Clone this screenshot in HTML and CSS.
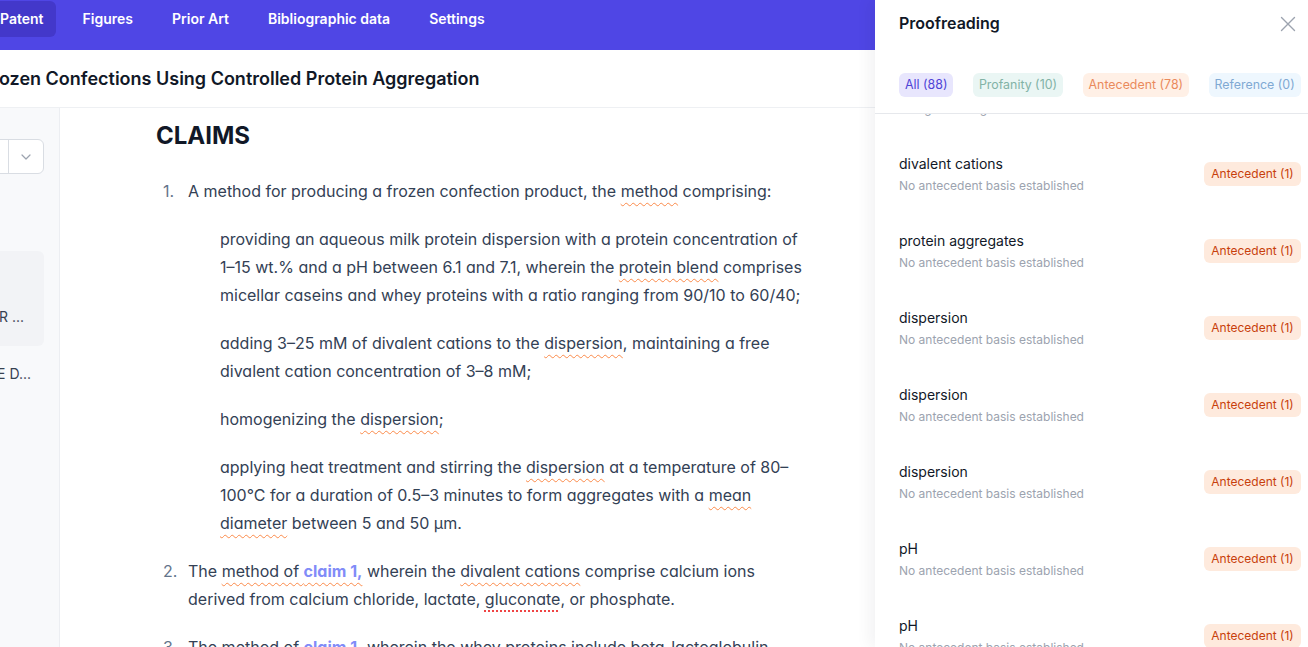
FILE: index.html
```html
<!DOCTYPE html>
<html lang="en">
<head>
<meta charset="utf-8">
<title>Claims – Proofreading</title>
<link rel="stylesheet" href="styles.css">
</head>
<body>
<div class="app">
  <div class="workspace">
    <nav class="topnav">
      <a class="tab active">Patent</a>
      <a class="tab">Figures</a>
      <a class="tab">Prior Art</a>
      <a class="tab">Bibliographic data</a>
      <a class="tab">Settings</a>
    </nav>
    <header class="titlebar">
      <h1>Frozen Confections Using Controlled Protein Aggregation</h1>
    </header>
    <div class="work-body">
      <aside class="sidebar">
        <div class="select">
          <div class="select-value"></div>
          <div class="select-toggle">
            <svg width="10" height="6" viewBox="0 0 10 6" fill="none"><path d="M1 1l4 4 4-4" stroke="#9ca3af" stroke-width="1.2" stroke-linecap="round" stroke-linejoin="round"/></svg>
          </div>
        </div>
        <div class="side-item selected"><span class="side-text">R ...</span></div>
        <div class="side-item"><span class="side-text">E D...</span></div>
      </aside>
      <main class="doc">
        <h2 class="doc-heading">CLAIMS</h2>
        <ol class="claims">
          <li class="claim">
            <span class="claim-num">1.</span>
            <div class="claim-body">
              <p>A method for producing a frozen confection product, the <span class="flag">method</span> comprising:</p>
              <p class="sub">providing an aqueous milk protein dispersion with a protein concentration of 1–15 wt.% and a pH between 6.1 and 7.1, wherein the <span class="flag">protein blend</span> comprises micellar caseins and whey proteins with a ratio ranging from 90/10 to 60/40;</p>
              <p class="sub">adding 3–25 mM of divalent cations to the <span class="flag">dispersion</span>, maintaining a free divalent cation concentration of 3–8 mM;</p>
              <p class="sub">homogenizing the <span class="flag">dispersion</span>;</p>
              <p class="sub">applying heat treatment and stirring the <span class="flag">dispersion</span> at a temperature of 80–100°C for a duration of 0.5–3 minutes to form aggregates with a <span class="flag">mean</span> <span class="flag">diameter</span> between 5 and 50 µm.</p>
            </div>
          </li>
          <li class="claim">
            <span class="claim-num">2.</span>
            <div class="claim-body">
              <p>The <span class="flag">method of <a class="ref">claim 1,</a></span> wherein the <span class="flag">divalent cations</span> comprise calcium ions derived from calcium chloride, lactate, <span class="spell">gluconate</span>, or phosphate.</p>
            </div>
          </li>
          <li class="claim">
            <span class="claim-num">3.</span>
            <div class="claim-body">
              <p>The method of <a class="ref">claim 1,</a> wherein the whey proteins include beta-lactoglobulin, alpha-lactalbumin or a mixture thereof.</p>
            </div>
          </li>
        </ol>
      </main>
    </div>
  </div>

  <aside class="panel">
    <div class="panel-head">
      <div class="panel-title-row">
        <h3 class="panel-title">Proofreading</h3>
        <button class="close" aria-label="Close">
          <svg width="16" height="16" viewBox="0 0 16 16" fill="none"><path d="M1.5 1.5l13 13M14.5 1.5l-13 13" stroke="#9ca3af" stroke-width="1.4" stroke-linecap="round"/></svg>
        </button>
      </div>
      <div class="chips">
        <span class="chip chip-all">All (88)</span>
        <span class="chip chip-prof">Profanity (10)</span>
        <span class="chip chip-ante">Antecedent (78)</span>
        <span class="chip chip-ref">Reference (0)</span>
      </div>
    </div>
    <div class="issues">
      <div class="issues-inner">
        <div class="issue">
          <div class="issue-text"><div class="issue-term">suitable amount</div><div class="issue-desc">Using an ambiguous term</div></div>
          <span class="badge">Antecedent (1)</span>
        </div>
        <div class="issue">
          <div class="issue-text"><div class="issue-term">divalent cations</div><div class="issue-desc">No antecedent basis established</div></div>
          <span class="badge">Antecedent (1)</span>
        </div>
        <div class="issue">
          <div class="issue-text"><div class="issue-term">protein aggregates</div><div class="issue-desc">No antecedent basis established</div></div>
          <span class="badge">Antecedent (1)</span>
        </div>
        <div class="issue">
          <div class="issue-text"><div class="issue-term">dispersion</div><div class="issue-desc">No antecedent basis established</div></div>
          <span class="badge">Antecedent (1)</span>
        </div>
        <div class="issue">
          <div class="issue-text"><div class="issue-term">dispersion</div><div class="issue-desc">No antecedent basis established</div></div>
          <span class="badge">Antecedent (1)</span>
        </div>
        <div class="issue">
          <div class="issue-text"><div class="issue-term">dispersion</div><div class="issue-desc">No antecedent basis established</div></div>
          <span class="badge">Antecedent (1)</span>
        </div>
        <div class="issue">
          <div class="issue-text"><div class="issue-term">pH</div><div class="issue-desc">No antecedent basis established</div></div>
          <span class="badge">Antecedent (1)</span>
        </div>
        <div class="issue">
          <div class="issue-text"><div class="issue-term">pH</div><div class="issue-desc">No antecedent basis established</div></div>
          <span class="badge">Antecedent (1)</span>
        </div>
      </div>
    </div>
  </aside>
</div>
</body>
</html>
```
FILE: styles.css
```css
* { box-sizing: border-box; }
html, body {
  margin: 0;
  padding: 0;
  height: 100%;
  overflow: hidden;
  background: #ffffff;
  font-family: Inter, "Noto Sans", "Liberation Sans", sans-serif;
  color: #111827;
}
.app {
  display: flex;
  width: 1308px;
  height: 647px;
  overflow: hidden;
}
.workspace {
  flex: 0 0 875px;
  display: flex;
  flex-direction: column;
  overflow: hidden;
  min-width: 0;
}

/* top nav */
.topnav {
  flex: 0 0 50px;
  background: #4f46e5;
  display: flex;
  align-items: flex-start;
  gap: 15px;
  padding-top: 1px;
  margin-left: -12px;
}
.tab {
  display: block;
  padding: 8px 12px;
  font-size: 14px;
  line-height: 20px;
  font-weight: 600;
  color: #ffffff;
  border-radius: 6px;
  white-space: nowrap;
}
.tab.active { background: #4338ca; }

/* title */
.titlebar {
  flex: 0 0 58px;
  border-bottom: 1px solid #eef0f3;
  display: flex;
  align-items: center;
  padding-top: 1px;
}
.titlebar h1 {
  margin: 0 0 0 -18px;
  font-size: 18px;
  line-height: 24px;
  font-weight: 600;
  color: #111827;
  white-space: nowrap;
}

.work-body {
  flex: 1;
  display: flex;
  min-height: 0;
}

/* left sidebar (partially scrolled out) */
.sidebar {
  flex: 0 0 60px;
  background: #f8f9fb;
  border-right: 1px solid #eceef2;
  padding: 31px 15px 0 0;
  display: flex;
  flex-direction: column;
  align-items: flex-end;
  overflow: hidden;
}
.select {
  display: flex;
  width: 120px;
  height: 35px;
  border: 1px solid #d9dde3;
  border-radius: 6px;
  background: #ffffff;
  flex: 0 0 auto;
}
.select-value { flex: 1; }
.select-toggle {
  flex: 0 0 35px;
  border-left: 1px solid #d9dde3;
  display: flex;
  align-items: center;
  justify-content: center;
}
.side-item {
  width: 160px;
  flex: 0 0 auto;
  display: flex;
  justify-content: flex-end;
  align-items: flex-end;
  padding: 0 20px 0 0;
  font-size: 14px;
  line-height: 20px;
  color: #374151;
  white-space: nowrap;
}
.side-item.selected {
  margin-top: 77px;
  height: 95px;
  padding-bottom: 19px;
  background: #f2f3f6;
  border-radius: 6px;
}
.side-item + .side-item {
  margin-top: 18px;
  padding-right: 13px;
}

/* document */
.doc {
  flex: 1;
  padding: 12px 0 0 96px;
  overflow: hidden;
  font-feature-settings: "cv11";
}
.doc-heading {
  margin: 0;
  font-size: 24px;
  line-height: 32px;
  font-weight: 700;
  color: #111827;
}
.claims {
  list-style: none;
  margin: 25px 0 0;
  padding: 0 0 0 7px;
  width: 652px;
}
.claim {
  display: flex;
  margin-bottom: 20px;
  font-size: 16px;
  line-height: 28px;
  color: #334155;
}
.claim-num {
  flex: 0 0 25px;
  color: #64748b;
}
.claim-body { flex: 1; min-width: 0; }
.claim-body p { margin: 0; }
.claim-body p.sub {
  margin-top: 20px;
  padding-left: 32px;
}
.flag {
  text-decoration: underline wavy #fb8a4a;
  text-decoration-thickness: 1px;
  text-underline-offset: 5px;
}
.spell {
  text-decoration: underline dotted #ef4444;
  text-decoration-thickness: 2px;
  text-underline-offset: 5px;
}
.ref {
  color: #818cf8;
  font-weight: 700;
  text-decoration: none;
}

/* proofreading panel */
.panel {
  flex: 0 0 433px;
  display: flex;
  flex-direction: column;
  background: #ffffff;
  box-shadow: -6px 0 14px rgba(17, 24, 39, 0.05);
  position: relative;
  z-index: 2;
  min-height: 0;
}
.panel-head {
  flex: 0 0 114px;
  border-bottom: 1px solid #e6e8ec;
  padding: 0 9px 0 24px;
  background: #ffffff;
}
.panel-title-row {
  display: flex;
  align-items: center;
  justify-content: space-between;
  height: 46px;
}
.panel-title {
  margin: 0;
  font-size: 16px;
  line-height: 24px;
  font-weight: 600;
  color: #111827;
}
.close {
  border: 0;
  background: none;
  padding: 0;
  margin: 2px 5px 0 0;
  width: 16px;
  height: 16px;
  display: flex;
}
.chips {
  display: flex;
  gap: 19.5px;
  margin-top: 27px;
}
.chip {
  display: inline-block;
  padding: 4px 6px;
  font-size: 12.4px;
  line-height: 16px;
  border-radius: 6px;
  white-space: nowrap;
}
.chip-all { background: #e8e6fd; color: #4f44d6; }
.chip-prof { background: #eaf6f4; color: #82b3a6; }
.chip-ante { background: #fff0e6; color: #ea8a5c; }
.chip-ref { background: #eef7fe; color: #80a9d3; }

.issues {
  flex: 1;
  overflow: hidden;
  min-height: 0;
}
.issues-inner { margin-top: -56px; }
.issue {
  display: flex;
  align-items: center;
  justify-content: space-between;
  height: 77px;
  padding: 0 9px 0 24px;
}
.issue-term {
  font-size: 14px;
  line-height: 20px;
  color: #111827;
}
.issue-desc {
  margin-top: 4px;
  font-size: 12px;
  line-height: 16px;
  color: #9ca3af;
}
.badge {
  padding: 4px 7px;
  font-size: 12px;
  line-height: 16px;
  border-radius: 6px;
  background: #feeadd;
  color: #c83f0c;
  white-space: nowrap;
}
```
